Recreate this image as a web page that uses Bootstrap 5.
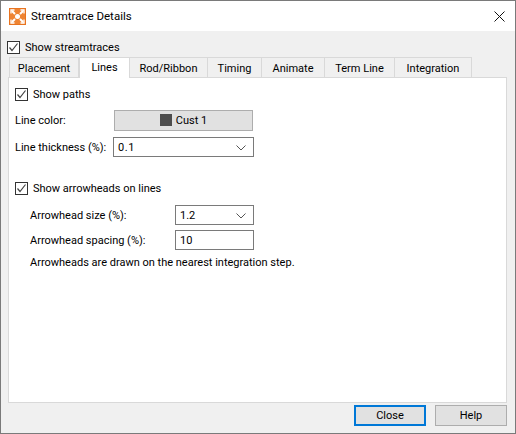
<!DOCTYPE html>
<html lang="en"><head><meta charset="utf-8"><title>Streamtrace Details</title>
<link rel="stylesheet" href="https://cdn.jsdelivr.net/npm/bootstrap@5.3.0/dist/css/bootstrap.min.css">
<style>
html,body{height:100%}
body{background:#f0f0f0;font-family:Roboto,"Noto Sans",sans-serif;font-size:11px;color:#000;line-height:16px;overflow:hidden}
.dlg{width:516px;height:434px;border:1px solid #7a7a7a;background:#f0f0f0}
.titlebar{height:30px;flex:none;background:#fff;padding-left:8px;gap:5px;font-size:11.5px}
.xclose{margin-left:auto;margin-right:10px;line-height:0}
.topcheck{margin:10px 0 0 6px;height:13px;flex:none}
.chk{width:13px;height:13px;border:1px solid #333;background:#fff;flex:none;margin-right:5px;line-height:0}
.tabsrow{margin:3px 0 0 8px;height:20px;flex:none;padding:0;align-items:flex-end;list-style:none;flex-wrap:nowrap}
.tabitem{height:20px;border:1px solid #d9d9d9;border-left:0;border-bottom:0;background:#f0f0f0;text-align:center;line-height:22px;padding:0}
.tabitem:first-child{border-left:1px solid #d9d9d9}
.tabitem.on{height:21px;background:#fff;border-left:1px solid #d9d9d9;margin-bottom:-1px;position:relative;z-index:1;line-height:20px}
.w-placement{width:70px}.w-lines{width:51px}.w-rod{width:78px}.w-timing{width:54px}.w-animate{width:63px}.w-term{width:70px}.w-integ{width:77px}
.panel{margin:0 8px 0 7px;height:326px;flex:none;background:#fff;border:1px solid #d9d9d9;padding:10px 6px}
.rowa{height:13px}
.lbl{flex:none;padding-top:1px}
.colorbtn{width:139px;height:21px;background:#e1e1e1;border:1px solid #adadad;border-radius:0;font-size:11px;line-height:17px;padding:0;color:#000}
.swatch{display:inline-block;width:12px;height:12px;background:#4d4d4d;margin-right:4px;vertical-align:-2px}
.fakeselect{height:20px;border:1px solid #7a7a7a;background:#fff;padding:1px 4px 0;line-height:18px;border-radius:0}
.fakeselect svg{margin-left:auto;margin-right:3px}
.sel-wide{width:141px;letter-spacing:.6px}
.sel-short{width:79px}
.foot{height:30px;flex:none;margin:0 8px 0 0;gap:9px;padding-top:2px}
.fbtn{width:72px;height:21px;background:#e1e1e1;border:1px solid #adadad;border-radius:0;padding:0;font-size:11px;line-height:17px;color:#000}
.fbtn.dflt{border:2px solid #0078d7;line-height:15px}
.r1{margin-top:9px}.l1{width:99px}
.r2{margin-top:6px}.l2{width:98px}
.r3{margin-top:25px}
.r4{margin-top:10px;margin-left:15px}.l3{width:145px}
.r5{margin-top:5px;margin-left:15px}
.r6{margin-top:5px;margin-left:15px}
</style></head><body>
<div class="dlg d-flex flex-column">
  <div class="titlebar d-flex align-items-center">
    <svg width="17" height="17" viewBox="0 0 17 17"><rect width="17" height="17" fill="#e8731f"/><rect x="1" y="1" width="15" height="15" fill="#ee8433"/><g stroke="#fff" fill="none"><path d="M6 6 3 3M11 6l3-3M6 11l-3 3M11 11l3 3" stroke-width="2"/><path d="M2 5.500V2h3.500M11.500 2H15v3.500M2 11.500V15h3.500M11.500 15H15v-3.500" stroke-width="1.300"/></g><circle cx="8.500" cy="8.500" r="2.500" fill="#fff"/></svg>
    <span>Streamtrace Details</span>
    <span class="xclose"><svg width="11" height="11" viewBox="0 0 11 11"><path d="M.5.5l10 10M10.500.5l-10 10" stroke="#111" fill="none"/></svg></span>
  </div>
  <div class="d-flex align-items-center topcheck"><span class="chk"><svg width="11" height="11" viewBox="0 0 11 11"><path d="M1.500 5.500 4 8.500 9.500 1.500" stroke="#444" stroke-width="1.200" fill="none"/></svg></span><span>Show streamtraces</span></div>
  <ul class="nav tabsrow">
    <li class="nav-item tabitem w-placement">Placement</li>
    <li class="nav-item tabitem on w-lines">Lines</li>
    <li class="nav-item tabitem w-rod">Rod/Ribbon</li>
    <li class="nav-item tabitem w-timing">Timing</li>
    <li class="nav-item tabitem w-animate">Animate</li>
    <li class="nav-item tabitem w-term">Term Line</li>
    <li class="nav-item tabitem w-integ">Integration</li>
  </ul>
  <div class="panel">
    <div class="d-flex align-items-center rowa"><span class="chk"><svg width="11" height="11" viewBox="0 0 11 11"><path d="M1.500 5.500 4 8.500 9.500 1.500" stroke="#444" stroke-width="1.200" fill="none"/></svg></span><span>Show paths</span></div>
    <div class="d-flex align-items-center r1"><span class="lbl l1">Line color:</span><button class="btn colorbtn" type="button"><span class="swatch"></span>Cust 1</button></div>
    <div class="d-flex align-items-center r2"><span class="lbl l2">Line thickness (%):</span><div class="fakeselect sel-wide d-flex align-items-center"><span>0.1</span><svg width="10" height="6" viewBox="0 0 10 6"><path d="M.500.500 5 5 9.500.500" stroke="#555" fill="none"/></svg></div></div>
    <div class="d-flex align-items-center rowa r3"><span class="chk"><svg width="11" height="11" viewBox="0 0 11 11"><path d="M1.500 5.500 4 8.500 9.500 1.500" stroke="#444" stroke-width="1.200" fill="none"/></svg></span><span>Show arrowheads on lines</span></div>
    <div class="d-flex align-items-center r4"><span class="lbl l3">Arrowhead size (%):</span><div class="fakeselect sel-short d-flex align-items-center"><span>1.2</span><svg width="10" height="6" viewBox="0 0 10 6"><path d="M.500.500 5 5 9.500.500" stroke="#555" fill="none"/></svg></div></div>
    <div class="d-flex align-items-center r5"><span class="lbl l3">Arrowhead spacing (%):</span><div class="fakeselect sel-short d-flex align-items-center"><span>10</span></div></div>
    <div class="r6">Arrowheads are drawn on the nearest integration step.</div>
  </div>
  <div class="d-flex justify-content-end foot">
    <button class="btn fbtn dflt" type="button">Close</button>
    <button class="btn fbtn" type="button">Help</button>
  </div>
</div>
</body></html>
